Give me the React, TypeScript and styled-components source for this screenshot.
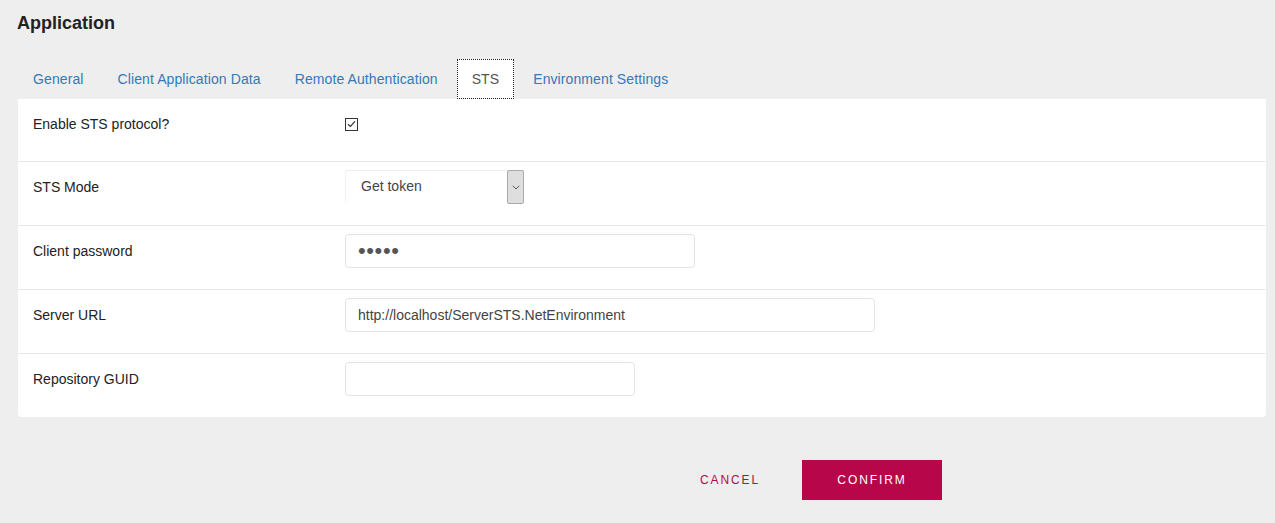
import React from "react";
import styled, { createGlobalStyle } from "styled-components";

const GlobalStyle = createGlobalStyle`
  html, body {
    margin: 0;
    padding: 0;
    background: #eeeeee;
    font-family: "Liberation Sans", Arial, sans-serif;
    font-size: 14px;
    color: #222;
  }
`;

const Page = styled.div`
  padding: 12px 9px 0 18px;
  min-height: 523px;
  box-sizing: border-box;
`;

const Title = styled.h1`
  margin: 0 0 0 -1px;
  font-size: 18px;
  line-height: 22px;
  font-weight: bold;
  color: #222;
`;

const Tabs = styled.ul`
  list-style: none;
  display: flex;
  margin: 25px 0 0;
  padding: 0;
`;

const Tab = styled.li<{ $active?: boolean }>`
  margin-right: 4px;
  padding: 10px 15px 10px;
  line-height: 20px;
  letter-spacing: 0.1px;
  color: ${(p) => (p.$active ? "#555" : "#337ab7")};
  background: ${(p) => (p.$active ? "#fff" : "transparent")};
  outline: ${(p) => (p.$active ? "1px dotted #222" : "none")};
  outline-offset: -1px;
  cursor: pointer;
`;

const Panel = styled.div`
  background: #fff;
  border-radius: 0 0 4px 4px;
`;

const Row = styled.div`
  display: grid;
  grid-template-columns: 312px 1fr;
  align-items: center;
  padding: 8px 15px 21px;
  border-bottom: 1px solid #e8e8e8;

  &:first-child {
    padding-top: 8px;
    padding-bottom: 20px;
  }

  &:last-child {
    border-bottom: none;
  }
`;

const Label = styled.div`
  line-height: 34px;
  color: #222;
`;

const Control = styled.div`
  height: 34px;
  display: flex;
  align-items: center;
`;

const CheckBox = styled.span`
  width: 11px;
  height: 11px;
  border: 1px solid #333;
  display: flex;
  align-items: center;
  justify-content: center;
`;

const Select = styled.div`
  width: 179px;
  height: 34px;
  box-sizing: border-box;
  display: flex;
  border-top: 1px solid #eee;
  border-left: 1px solid #f3f3f3;
  border-radius: 3px 0 0 3px;
`;

const SelectValue = styled.span`
  flex: 1;
  padding-left: 15px;
  line-height: 31px;
  color: #444;
`;

const SelectArrow = styled.span`
  width: 15px;
  margin-top: -1px;
  background: #dedede;
  border: 1px solid #aaa;
  border-radius: 2px;
  display: flex;
  align-items: center;
  justify-content: center;
`;

const Input = styled.input<{ $width: number }>`
  width: ${(p) => p.$width}px;
  height: 34px;
  box-sizing: border-box;
  border: 1px solid #e4e4e4;
  border-radius: 4px;
  padding: 0 12px;
  font-family: "Liberation Sans", Arial, sans-serif;
  font-size: 14px;
  color: #444;
  background: #fff;
  outline: none;

  &[type="password"] {
    font-size: 22px;
    letter-spacing: 0.6px;
    color: #555;
  }
`;

const Footer = styled.div`
  display: flex;
  justify-content: flex-end;
  align-items: center;
  gap: 22px;
  margin-top: 43px;
  padding-right: 324px;
`;

const Button = styled.button<{ $primary?: boolean }>`
  height: 40px;
  border: none;
  padding: 0 ${(p) => (p.$primary ? "0" : "20px")};
  width: ${(p) => (p.$primary ? "140px" : "auto")};
  background: ${(p) => (p.$primary ? "#b8064a" : "transparent")};
  color: ${(p) => (p.$primary ? "#fff" : "#b8064a")};
  font-family: "Liberation Sans", Arial, sans-serif;
  font-size: 12px;
  letter-spacing: 1.9px;
  cursor: pointer;
`;

const tabs = [
  "General",
  "Client Application Data",
  "Remote Authentication",
  "STS",
  "Environment Settings",
];

export default function App() {
  return (
    <>
      <GlobalStyle />
      <Page>
        <Title>Application</Title>
        <Tabs>
          {tabs.map((t) => (
            <Tab key={t} $active={t === "STS"}>
              {t}
            </Tab>
          ))}
        </Tabs>
        <Panel>
          <Row>
            <Label>Enable STS protocol?</Label>
            <Control>
              <CheckBox>
                <svg width="9" height="8" viewBox="0 0 9 8">
                  <path d="M1 4.2 L3.4 6.4 L8 1.4" fill="none" stroke="#333" strokeWidth="1.2" />
                </svg>
              </CheckBox>
            </Control>
          </Row>
          <Row>
            <Label>STS Mode</Label>
            <Control>
              <Select>
                <SelectValue>Get token</SelectValue>
                <SelectArrow>
                  <svg width="8" height="5" viewBox="0 0 8 5">
                    <path d="M0.8 0.8 L4 4 L7.2 0.8" fill="none" stroke="#555" strokeWidth="1" />
                  </svg>
                </SelectArrow>
              </Select>
            </Control>
          </Row>
          <Row>
            <Label>Client password</Label>
            <Control>
              <Input type="password" defaultValue="12345" $width={350} />
            </Control>
          </Row>
          <Row>
            <Label>Server URL</Label>
            <Control>
              <Input
                type="text"
                defaultValue="http://localhost/ServerSTS.NetEnvironment"
                $width={530}
              />
            </Control>
          </Row>
          <Row>
            <Label>Repository GUID</Label>
            <Control>
              <Input type="text" defaultValue="" $width={290} />
            </Control>
          </Row>
        </Panel>
        <Footer>
          <Button>CANCEL</Button>
          <Button $primary>CONFIRM</Button>
        </Footer>
      </Page>
    </>
  );
}
